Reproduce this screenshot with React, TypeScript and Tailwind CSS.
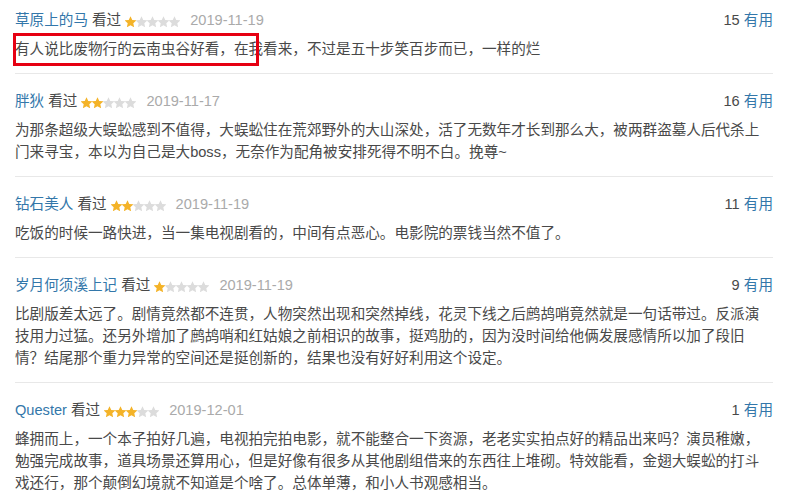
const reviews = [
  {
    name: "草原上的马",
    stars: 1,
    date: "2019-11-19",
    votes: 15,
    text: "有人说比废物行的云南虫谷好看，在我看来，不过是五十步笑百步而已，一样的烂",
    boxed: true,
  },
  {
    name: "胖狄",
    stars: 2,
    date: "2019-11-17",
    votes: 16,
    text: "为那条超级大蜈蚣感到不值得，大蜈蚣住在荒郊野外的大山深处，活了无数年才长到那么大，被两群盗墓人后代杀上门来寻宝，本以为自己是大boss，无奈作为配角被安排死得不明不白。挽尊~",
  },
  {
    name: "钻石美人",
    stars: 2,
    date: "2019-11-19",
    votes: 11,
    text: "吃饭的时候一路快进，当一集电视剧看的，中间有点恶心。电影院的票钱当然不值了。",
  },
  {
    name: "岁月何须溪上记",
    stars: 1,
    date: "2019-11-19",
    votes: 9,
    text: "比剧版差太远了。剧情竟然都不连贯，人物突然出现和突然掉线，花灵下线之后鹧鸪哨竟然就是一句话带过。反派演技用力过猛。还另外增加了鹧鸪哨和红姑娘之前相识的故事，挺鸡肋的，因为没时间给他俩发展感情所以加了段旧情？结尾那个重力异常的空间还是挺创新的，结果也没有好好利用这个设定。",
  },
  {
    name: "Quester",
    stars: 3,
    date: "2019-12-01",
    votes: 1,
    text: "蜂拥而上，一个本子拍好几遍，电视拍完拍电影，就不能整合一下资源，老老实实拍点好的精品出来吗？演员稚嫩，勉强完成故事，道具场景还算用心，但是好像有很多从其他剧组借来的东西往上堆砌。特效能看，金翅大蜈蚣的打斗戏还行，那个颠倒幻境就不知道是个啥了。总体单薄，和小人书观感相当。",
  },
];

function Star({ on }: { on: boolean }) {
  return (
    <svg width="11" height="11" viewBox="2 2 20 19" className="block shrink-0">
      <path
        d="M12 1.8l3.2 6.9 7.4.8-5.5 5.1 1.5 7.4L12 18.3l-6.6 3.7 1.5-7.4-5.5-5.1 7.4-.8z"
        fill={on ? "#f4b328" : "#dcdcdc"}
      />
    </svg>
  );
}

export default function App() {
  return (
    <main
      className="min-h-screen w-[803px] bg-white pl-[15px] pr-[30px] text-[14.6px]"
      style={{ fontFamily: '"Liberation Sans", "Noto Sans CJK SC", sans-serif' }}
    >
      {reviews.map((r, i) => (
        <div key={i} className={`pb-[13px] ${i === 0 ? "pt-[10px]" : "pt-[17px]"} ${i < reviews.length - 1 ? "border-b border-[#e8e8e8]" : ""}`}>
          <div className="flex h-[22px] items-center">
            <span className="text-[#3377aa]">{r.name}</span>
            <span className="ml-[4px] text-[#494949]">看过</span>
            <span className="ml-[4px] flex items-center">
              {[0, 1, 2, 3, 4].map((s) => (
                <Star key={s} on={s < r.stars} />
              ))}
            </span>
            <span className="ml-[10px] text-[#aaaaaa]">{r.date}</span>
            <span className="ml-auto text-[#494949]">
              {r.votes} <span className="text-[#3377aa]">有用</span>
            </span>
          </div>
          <p className="mt-[6px] leading-[22px] text-[#494949]">
            {r.boxed ? (
              <span className="relative">
                <span className="absolute left-[-2px] top-[-8px] h-[33px] w-[246px] border-[3px] border-[#e60012]" />
                {r.text}
              </span>
            ) : (
              r.text
            )}
          </p>
        </div>
      ))}
    </main>
  );
}
